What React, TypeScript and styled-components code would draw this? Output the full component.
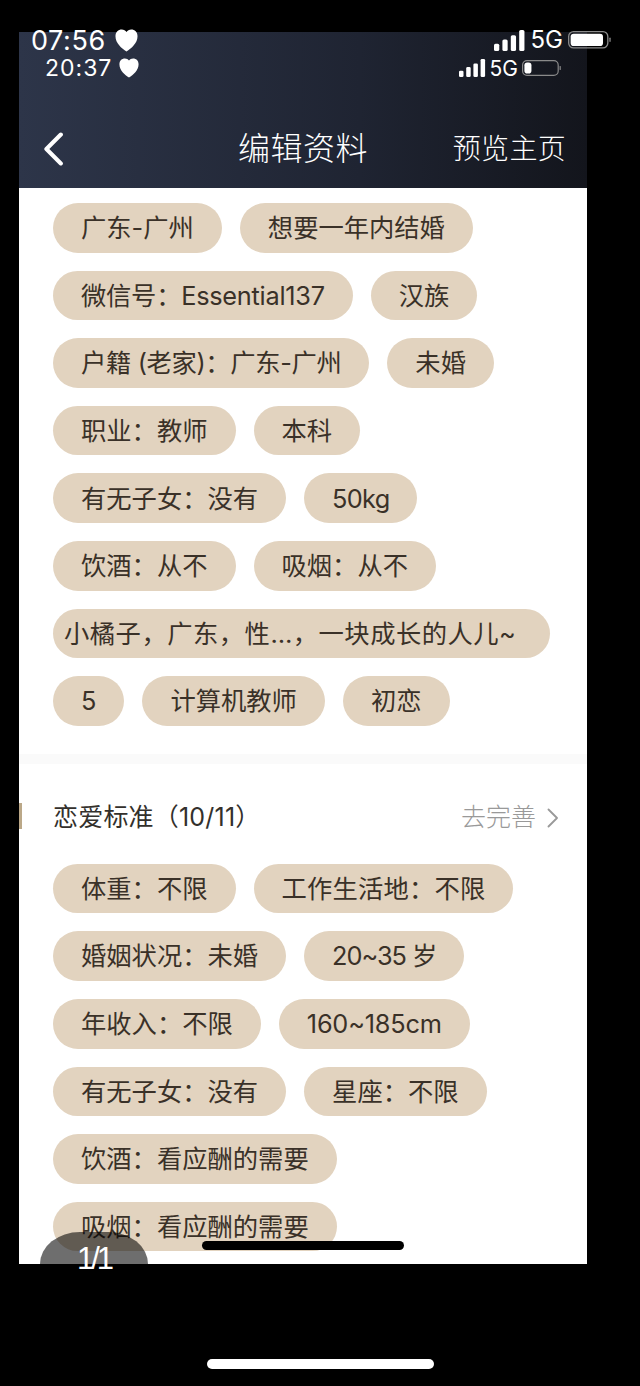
import React, { FC } from "react";
import styled, { createGlobalStyle } from "styled-components";

const GlobalStyle = createGlobalStyle`
  html, body {
    margin: 0;
    padding: 0;
    background: #000;
  }
  body {
    font-family: Inter, "Noto Sans CJK SC", sans-serif;
  }
`;

const Page = styled.div`
  position: relative;
  width: 640px;
  height: 1386px;
  padding: 32px 53px 0 19px;
  box-sizing: border-box;
  background: #000;
  overflow: hidden;
`;

const Phone = styled.div`
  width: 568px;
  height: 1232px;
  background: #fff;
  overflow: hidden;
`;

const Header = styled.header`
  height: 156px;
  box-sizing: border-box;
  padding: 28px 24px 0;
  background: linear-gradient(90deg, #2d3549 0%, #1f2432 60%, #13151c 100%);
  color: #fff;
`;

const InnerStatus = styled.div`
  display: flex;
  align-items: center;
  justify-content: space-between;
  padding: 0 1px 0 2px;
  height: 16px;
`;

const StatusGroup = styled.div<{ $gap: number }>`
  display: flex;
  align-items: center;
  gap: ${({ $gap }) => $gap}px;
`;

const Clock = styled.span<{ $size: number; $tracking?: number }>`
  font-family: Inter, "Liberation Sans", sans-serif;
  font-size: ${({ $size }) => $size}px;
  letter-spacing: ${({ $tracking }) => $tracking ?? 0}px;
  line-height: 1;
  color: #fff;
`;

const NavBar = styled.div`
  display: grid;
  grid-template-columns: 1fr auto 1fr;
  align-items: center;
  height: 60px;
  margin-top: 43px;
`;

const BackButton = styled.div`
  display: flex;
  align-items: center;
`;

const Title = styled.h1`
  margin: 0;
  font-size: 32px;
  font-weight: 300;
  line-height: 1;
  letter-spacing: 0.5px;
`;

const Preview = styled.div`
  justify-self: end;
  margin-right: -3px;
  font-size: 28px;
  font-weight: 300;
  line-height: 1;
  letter-spacing: 0.3px;
`;

const Tags = styled.div`
  display: flex;
  flex-wrap: wrap;
  gap: 18px;
  padding: 0 34px;
`;

const Tag = styled.span<{ $tight?: boolean; $tracking?: number }>`
  box-sizing: border-box;
  height: 49.6px;
  display: flex;
  align-items: center;
  padding: 0 ${({ $tight }) => ($tight ? "11px" : "28px")};
  width: ${({ $tight }) => ($tight ? "497px" : "auto")};
  border-radius: 25px;
  background: #e2d3bf;
  color: #3a3128;
  font-size: 25.3px;
  letter-spacing: ${({ $tracking }) => $tracking ?? 0}px;
  line-height: 1;
  white-space: nowrap;
`;

const FirstTags = styled(Tags)`
  padding-top: 15px;
`;

const Band = styled.div`
  height: 10px;
  margin-top: 28px;
  background: #fafafa;
`;

const SectionHead = styled.div`
  display: flex;
  align-items: center;
  justify-content: space-between;
  height: 26px;
  margin: 39px 0 35px;
  padding: 4px 28px 0 31px;
  box-sizing: border-box;
  border-left: 3px solid #bba888;
`;

const SectionTitle = styled.h2`
  margin: 0;
  font-size: 25px;
  font-weight: 400;
  letter-spacing: 0.2px;
  line-height: 1;
  color: #33302c;
`;

const MoreLink = styled.div`
  display: flex;
  align-items: center;
  gap: 11px;
  font-size: 25px;
  font-weight: 300;
  line-height: 1;
  color: #999;
`;

const OuterStatus = styled.div`
  position: absolute;
  top: 27px;
  left: 31px;
  width: 581px;
  height: 26px;
  display: flex;
  align-items: center;
  justify-content: space-between;
`;

const CountBadge = styled.div`
  position: absolute;
  left: 40px;
  top: 1232px;
  width: 108px;
  height: 32px;
  border-radius: 40px 40px 0 0 / 32px 32px 0 0;
  background: rgba(0, 0, 0, 0.57);
`;

const CountText = styled.span`
  position: absolute;
  left: 37px;
  top: 11px;
  font-family: "Liberation Sans", Arial, sans-serif;
  font-size: 31px;
  letter-spacing: -3px;
  line-height: 32px;
  color: #fff;
`;

const Gesture = styled.div`
  position: absolute;
  left: 202px;
  top: 1241px;
  width: 202px;
  height: 9px;
  border-radius: 5px;
  background: #000;
`;

const HomeBar = styled.div`
  position: absolute;
  left: 207px;
  top: 1359px;
  width: 227px;
  height: 10px;
  border-radius: 5px;
  background: #fff;
`;

const Heart: FC<{ size: number }> = ({ size }) => (
  <svg width={size} height={size} viewBox="0 0 24 24" fill="#fff">
    <path d="M12 23.500C7 20 .500 15 .500 7.500.500 3 3.500.500 7 .500c2.200 0 4 1 5 2.500 1-1.500 2.800-2.500 5-2.500 3.500 0 6.500 2.500 6.500 7 0 7.500-6.500 12.500-11.500 16z" />
  </svg>
);

const Signal: FC<{ height: number }> = ({ height }) => (
  <svg width={height * 1.5} height={height} viewBox="0 0 30 20" fill="#fff">
    <rect x="0" y="13" width="5" height="7" rx="1.500" />
    <rect x="8" y="9" width="5" height="11" rx="1.500" />
    <rect x="16" y="5" width="5" height="15" rx="1.500" />
    <rect x="24" y="0" width="5" height="20" rx="1.500" />
  </svg>
);

const Battery: FC<{ width: number; level: number }> = ({ width, level }) => (
  <svg width={width} height={width * 0.4} viewBox="0 0 50 20" fill="none">
    <rect x="0.750" y="0.750" width="44.500" height="18.500" rx="5.500" stroke="#8a8a8a" strokeWidth="1.500" />
    <rect x="3" y="3" width={40 * level} height="14" rx="3.500" fill="#fff" />
    <rect x="47" y="7.500" width="1.500" height="5" rx="0.750" fill="#8a8a8a" />
  </svg>
);

const Chevron: FC<{ size: number; color: string; stroke: number }> = ({ size, color, stroke }) => (
  <svg width={size * 0.6} height={size} viewBox="0 0 12 20" fill="none">
    <path d="M10.500 1.500 2 10l8.500 8.500" stroke={color} strokeWidth={stroke} strokeLinecap="round" strokeLinejoin="round" />
  </svg>
);

const ForwardChevron = styled.span`
  display: flex;
  transform: scaleX(-1);
`;

type TagItem = { text: string; tracking?: number };

const basicTags: TagItem[] = [
  { text: "广东-广州" },
  { text: "想要一年内结婚" },
  { text: "微信号：Essential137", tracking: -0.25 },
  { text: "汉族" },
  { text: "户籍 (老家)：广东-广州", tracking: -0.35 },
  { text: "未婚" },
  { text: "职业：教师" },
  { text: "本科" },
  { text: "有无子女：没有" },
  { text: "50kg", tracking: -0.7 },
  { text: "饮酒：从不" },
  { text: "吸烟：从不" },
];

const extraTags: TagItem[] = [{ text: "5" }, { text: "计算机教师" }, { text: "初恋" }];

const standardTags: TagItem[] = [
  { text: "体重：不限" },
  { text: "工作生活地：不限", tracking: 0.2 },
  { text: "婚姻状况：未婚" },
  { text: "20~35 岁", tracking: -1 },
  { text: "年收入：不限" },
  { text: "160~185cm", tracking: -0.2 },
  { text: "有无子女：没有" },
  { text: "星座：不限" },
  { text: "饮酒：看应酬的需要" },
  { text: "吸烟：看应酬的需要" },
];

const renderTags = (items: TagItem[]) =>
  items.map((item) => (
    <Tag key={item.text} $tracking={item.tracking}>
      {item.text}
    </Tag>
  ));

const App: FC = () => {
  return (
    <Page>
      <GlobalStyle />
      <Phone>
        <Header>
          <InnerStatus>
            <StatusGroup $gap={7}>
              <Clock $size={23} $tracking={1}>
                20:37
              </Clock>
              <Heart size={20} />
            </StatusGroup>
            <StatusGroup $gap={4}>
              <Signal height={18} />
              <Clock $size={21}>5G</Clock>
              <Battery width={40} level={0.22} />
            </StatusGroup>
          </InnerStatus>
          <NavBar>
            <BackButton>
              <Chevron size={34} color="#fff" stroke={2.400} />
            </BackButton>
            <Title>编辑资料</Title>
            <Preview>预览主页</Preview>
          </NavBar>
        </Header>
        <FirstTags>
          {renderTags(basicTags)}
          <Tag $tight $tracking={0.5}>
            小橘子，广东，性…，一块成长的人儿~
          </Tag>
          {renderTags(extraTags)}
        </FirstTags>
        <Band />
        <SectionHead>
          <SectionTitle>恋爱标准（10/11）</SectionTitle>
          <MoreLink>
            去完善
            <ForwardChevron>
              <Chevron size={20} color="#999" stroke={1.800} />
            </ForwardChevron>
          </MoreLink>
        </SectionHead>
        <Tags>{renderTags(standardTags)}</Tags>
      </Phone>
      <OuterStatus>
        <StatusGroup $gap={9}>
          <Clock $size={27} $tracking={0.6}>
            07:56
          </Clock>
          <Heart size={23} />
        </StatusGroup>
        <StatusGroup $gap={5}>
          <Signal height={21} />
          <Clock $size={24}>5G</Clock>
          <Battery width={44} level={0.92} />
        </StatusGroup>
      </OuterStatus>
      <Gesture />
      <CountBadge>
        <CountText>1/1</CountText>
      </CountBadge>
      <HomeBar />
    </Page>
  );
};

export default App;
